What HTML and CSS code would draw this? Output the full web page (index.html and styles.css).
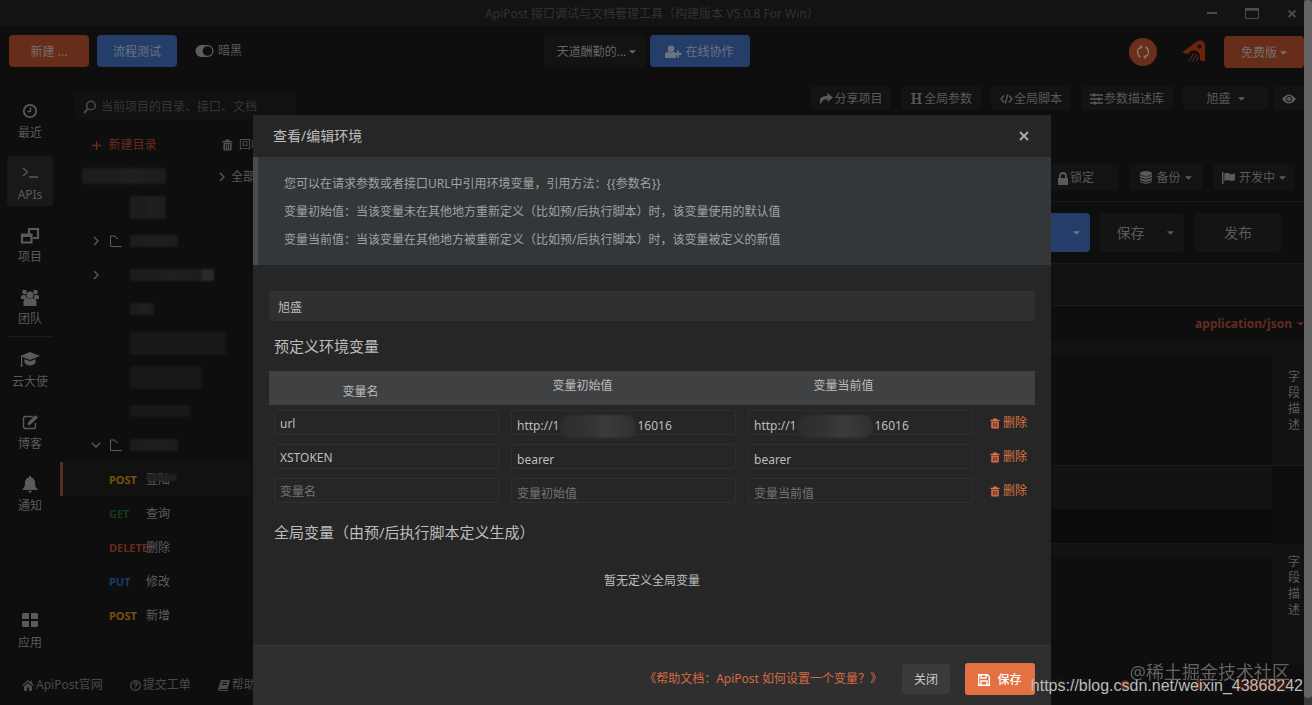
FILE: index.html
```html
<!DOCTYPE html>
<html lang="zh-CN">
<head>
<meta charset="utf-8">
<title>ApiPost</title>
<link rel="stylesheet" href="styles.css">
</head>
<body>
<svg class="defs" aria-hidden="true">
  <symbol id="i-trash" viewBox="0 0 12 12"><path fill-rule="evenodd" d="M4 0h4l.6 1.5H11.500V3H.5V1.500h2.900zM1.500 3.600h9V11q0 1-1 1h-7q-1 0-1-1zM3.500 5v5.500h.9V5zm2.100 0v5.500h.9V5zm2.100 0v5.500h.9V5z"/></symbol>
  <symbol id="i-caret" viewBox="0 0 8 4"><path d="M0 0h8L4 4z"/></symbol>
  <symbol id="i-chev" viewBox="0 0 8 10"><path d="M2 1l4 4-4 4" fill="none" stroke="currentColor" stroke-width="1.300"/></symbol>
  <symbol id="i-folder" viewBox="0 0 12 12"><path d="M.5 11V1h4.500l1.500 2.500H8M.5 11.500H12" fill="none" stroke="currentColor"/></symbol>
</svg>
<div class="window">
  <div class="app">
    <header class="titlebar">
      <h1 class="title">ApiPost 接口调试与文档管理工具（构建版本 V5.0.8 For Win）</h1>
      <div class="winctl">
        <button aria-label="最小化"><svg width="14" height="14" viewBox="0 0 14 14"><path d="M2 6h10" stroke="currentColor" stroke-width="2"/></svg></button>
        <button aria-label="最大化"><svg width="14" height="14" viewBox="0 0 14 14"><path d="M.5 1.500h13v10H.5z" fill="none" stroke="currentColor"/><path d="M0 2.500h14" stroke="currentColor" stroke-width="2.500"/></svg></button>
        <button aria-label="关闭窗口"><svg width="14" height="14" viewBox="0 0 14 14"><path d="M3.500 3.500l7 6.500M10.500 3.500l-7 6.500" stroke="currentColor" stroke-width="2"/></svg></button>
      </div>
    </header>

    <div class="topbar">
      <div class="group">
        <button class="btn orange wide">新建 ...</button>
        <button class="btn blue wide">流程测试</button>
        <button class="theme"><svg width="19" height="14" viewBox="0 0 19 14"><rect x=".5" y="1" width="18" height="12" rx="6" fill="currentColor"/><circle cx="12.500" cy="7" r="4.800" fill="#0e0e0e"/></svg>暗黑</button>
      </div>
      <div class="group center">
        <button class="btn dark team">天道酬勤的... <svg class="caret"><use href="#i-caret"/></svg></button>
        <button class="btn blue collab"><svg width="17" height="14" viewBox="0 0 17 14" fill="currentColor"><circle cx="6" cy="3.700" r="3.300"/><path d="M0 13V10q0-3 3.500-3.300 2.500 1.500 5 0Q10 6.800 11 8v5z"/><path d="M13 5.500v7M9.500 9h7" stroke="currentColor" stroke-width="2.200"/></svg>在线协作</button>
      </div>
      <div class="group right">
        <button class="sync" aria-label="同步"><svg width="16" height="16" viewBox="0 0 16 16" fill="none" stroke="currentColor" stroke-width="1.400"><path d="M5.500 13Q2.500 11.500 2.500 8T6 3.200M10.500 3q3 1.500 3 5T10 12.800"/><path d="M5 .8l3 2.300-3 2.500zM11 15.200l-3-2.300 3-2.500z" fill="currentColor" stroke="none"/></svg></button>
        <a class="avatar" href="#" aria-label="ApiPost"><svg width="28" height="28" viewBox="0 0 28 28"><path d="M2 14.500L16 4q2-1.500 4.500-1.500Q24.500 3 25 7v16q-3 .5-5-1 1-8-5-9.500-5-.5-7 3.500z" fill="#6e220a"/><circle cx="19.500" cy="8.500" r="2" fill="#1a1210"/><path d="M9 23l5-8M12.500 23.500l4.500-7.500M16.500 23l2-4" stroke="#5a2415" stroke-width="1.200"/></svg></a>
        <button class="btn orange plan">免费版 <svg class="caret"><use href="#i-caret"/></svg></button>
      </div>
    </div>

    <div class="work">
      <nav class="side">
        <a href="#"><svg width="16" height="16" viewBox="0 0 16 16" fill="none" stroke="currentColor"><circle cx="8" cy="8" r="6.200" stroke-width="1.800"/><path d="M8.500 4.500V8.500H5.500" stroke-width="1.400"/></svg>最近</a>
        <a href="#" class="on"><svg width="16" height="16" viewBox="0 0 16 16" fill="none" stroke="currentColor" stroke-width="1.300"><path d="M1 3l4.500 4L1 11M7 12h9"/></svg>APIs</a>
        <a href="#"><svg width="20" height="18" viewBox="0 0 20 18" fill="none" stroke="currentColor" stroke-width="2.200"><path d="M9 7V2h9v9h-5"/><path d="M2 7.500h9.500v8H2z"/><path d="M2 8.500h9" stroke-width="3"/></svg>项目</a>
        <a href="#"><svg width="18" height="17" viewBox="0 0 18 17" fill="currentColor"><circle cx="3.500" cy="3" r="2.300"/><circle cx="14.500" cy="3" r="2.300"/><circle cx="9" cy="6" r="3.500"/><path d="M0 10V8q0-2 2-2h2.500q.5 3 2 4zM18 10V8q0-2-2-2h-2.500q-.5 3-2 4zM2.500 17v-4q0-3.500 3.500-4 3 1.500 6 0 3.500 .5 3.500 4v4z"/></svg>团队</a>
        <hr>
        <a href="#"><svg width="20" height="15" viewBox="0 0 20 15" fill="currentColor"><path d="M10 0l10 4-10 4L0 4z"/><path d="M4.500 7v4q2.500 2.500 5.500 2.500t5.500-2.500V7L10 9.300z"/><path d="M1 4h1.300v8l.7 2.500H.5L1 12z"/></svg>云大使</a>
        <a href="#"><svg width="17" height="16" viewBox="0 0 17 16" fill="none" stroke="currentColor" stroke-width="1.400"><path d="M11 2.500H3.500q-2 0-2 2v8q0 2 2 2h8q2 0 2-2V9"/><path d="M6 11l.7-3 6.800-6.500 2 2L8.800 10z" fill="currentColor" stroke-width=".8"/></svg>博客</a>
        <a href="#"><svg width="16" height="17" viewBox="0 0 16 17" fill="currentColor"><path d="M7 0h2v1.500q4 .8 4 5 0 5 2.500 6.500v1H.5v-1Q3 11.500 3 6.500q0-4.200 4-5zM6 14.700h4q-.5 2-2 2t-2-2z"/></svg>通知</a>
        <a href="#" class="last"><svg width="16" height="14" viewBox="0 0 16 14" fill="currentColor"><path d="M1 0h6v6H0V1zM9 0h6l1 1v5H9zM0 8h7v6H1l-1-1zM9 8h7v5l-1 1H9z"/></svg>应用</a>
      </nav>

      <section class="tree">
        <label class="search"><svg width="14" height="14" viewBox="0 0 14 14" fill="none" stroke="currentColor"><circle cx="8" cy="5.500" r="4.300" stroke-width="1.600"/><path d="M5 8.800L1 13" stroke-width="2.200"/></svg><input type="text" placeholder="当前项目的目录、接口、文档" aria-label="搜索"></label>
        <div class="tools">
          <button class="newdir"><svg width="9" height="9" viewBox="0 0 9 9"><path d="M4.500 0v9M0 4.500h9" stroke="currentColor" stroke-width="1.300"/></svg>新建目录</button>
          <button class="bin"><svg width="11" height="12"><use href="#i-trash"/></svg>回收站</button>
        </div>
        <div class="tools second">
          <span class="smudge s0"></span>
          <button class="all"><svg class="chev"><use href="#i-chev"/></svg>全部</button>
        </div>
        <ul class="rows">
          <li><span class="smudge w36 tall"></span></li>
          <li><svg class="chev"><use href="#i-chev"/></svg><svg class="folder"><use href="#i-folder"/></svg><span class="smudge w48"></span></li>
          <li><svg class="chev"><use href="#i-chev"/></svg><span class="smudge w84 tip"></span></li>
          <li><span class="smudge w24"></span></li>
          <li><span class="smudge w96 faint tall"></span></li>
          <li><span class="smudge w72 faint tall"></span></li>
          <li><span class="smudge w60 faint"></span></li>
          <li><svg class="chev open"><use href="#i-chev"/></svg><svg class="folder"><use href="#i-folder"/></svg><span class="smudge w48"></span></li>
          <li class="api sel"><b class="post">POST</b><a href="#">登陆</a><i class="cover"></i></li>
          <li class="api"><b class="get">GET</b><a href="#">查询</a></li>
          <li class="api"><b class="del">DELETE</b><a href="#">删除</a></li>
          <li class="api"><b class="put">PUT</b><a href="#">修改</a></li>
          <li class="api"><b class="post">POST</b><a href="#">新增</a></li>
        </ul>
      </section>

      <main class="main">
        <div class="actions">
          <button class="chip"><svg width="14" height="12" viewBox="0 0 14 12" fill="currentColor"><path d="M8.500 0L14 4.500 8.500 9V6.300Q3 6 1.500 11.500-1.500 3 8.500 2.800z"/></svg>分享项目</button>
          <button class="chip"><svg width="13" height="13" viewBox="0 0 13 13" fill="none" stroke="currentColor"><path d="M3.500 1v11M9.500 1v11" stroke-width="2"/><path d="M1 1.500h5M7 1.500h5M1 11.500h5M7 11.500h5M3 6.500h7"/></svg>全局参数</button>
          <button class="chip"><svg width="13" height="12" viewBox="0 0 13 12" fill="none" stroke="currentColor" stroke-width="1.300"><path d="M4 2.500L1 6l3 3.500M9 2.500L12 6 9 9.500M7.700 1.500l-2.400 9"/></svg>全局脚本</button>
          <button class="chip lib"><svg width="13" height="12" viewBox="0 0 13 12" fill="none" stroke="currentColor" stroke-width="1.300"><path d="M0 2h13M0 6h13M0 10h13"/><path d="M4 .5v3M9 4.500v3M5 8.500v3" stroke-width="2.400"/></svg>参数描述库</button>
          <button class="chip env">旭盛 <svg class="caret"><use href="#i-caret"/></svg></button>
          <button class="chip eye" aria-label="查看环境"><svg width="14" height="10" viewBox="0 0 14 10"><path d="M0 5q7-9 14 0-7 9-14 0z" fill="currentColor"/><circle cx="7" cy="5" r="2.600" fill="none" stroke="#151515"/></svg></button>
        </div>
        <div class="status">
          <button class="chip lock"><svg width="12" height="13" viewBox="0 0 12 13"><path d="M1 6h10v7H1z" fill="currentColor"/><path d="M3 6V4q0-3 3-3t3 3v2" fill="none" stroke="currentColor" stroke-width="1.800"/></svg>锁定</button>
          <button class="chip backup"><svg width="12" height="13" viewBox="0 0 12 13" fill="currentColor"><ellipse cx="6" cy="2.500" rx="6" ry="2.400"/><path d="M0 4q6 3 12 0v2q-6 3.500-12 0zM0 7q6 3 12 0v2q-6 3.500-12 0zM0 10q6 3 12 0v1q-6 3.500-12 0z"/></svg>备份 <svg class="caret"><use href="#i-caret"/></svg></button>
          <button class="chip dev"><svg width="13" height="12" viewBox="0 0 13 12" fill="currentColor"><path d="M0 0h1.500v12H0zM2.300 1.500Q5 0 7.500 1.500T13 1v7q-3 1.500-5.500.5T2.300 9z"/></svg>开发中 <svg class="caret"><use href="#i-caret"/></svg></button>
        </div>
        <div class="sendbar">
          <button class="big send">发送 <svg class="caret"><use href="#i-caret"/></svg></button>
          <button class="big save">保存 <svg class="caret"><use href="#i-caret"/></svg></button>
          <button class="big publish">发布</button>
        </div>
        <div class="band"></div>
        <div class="mime"><button>application/json <svg class="caret"><use href="#i-caret"/></svg></button></div>
        <div class="editor first"><div class="pane"></div><div class="desc">字段描述</div></div>
        <div class="strip"></div>
        <div class="editor resp"><div class="pane"></div><div class="desc">字段描述</div></div>
      </main>
    </div>

    <footer class="foot">
      <a href="#"><svg width="12" height="11" viewBox="0 0 12 11" fill="currentColor"><path d="M6 0l2.500 2V.8H10v2.500l2 1.900-.8.900L6 1.700.8 6.100 0 5.200zM2 6.200L6 3l4 3.200V11H7V7.500H5V11H2z"/></svg>ApiPost官网</a>
      <a href="#"><svg width="11" height="11" viewBox="0 0 11 11" fill="none" stroke="currentColor" stroke-width="1.200"><circle cx="5.500" cy="5.500" r="4.800"/><path d="M3.800 4.200q0-1.500 1.700-1.500t1.700 1.400Q7.200 5 5.500 5.600v1M5.500 7.400v1.200"/></svg>提交工单</a>
      <a href="#"><svg width="12" height="11" viewBox="0 0 12 11"><path d="M3 0h9L9.500 9H2q-.8 1 .3 1.100H10V11H1.500Q-.5 10.500.3 8z" fill="currentColor"/><path d="M4.500 2.500h4.500M4 4.500h4.500" stroke="#0e0e0e"/></svg>帮助</a>
      <div class="footright"><span>字体大小</span><i class="dot"></i><i class="dot"></i><i class="dot long"></i></div>
    </footer>

    <div class="overlay">
      <section class="modal" role="dialog" aria-labelledby="dlg">
        <header class="mhead">
          <h2 id="dlg">查看/编辑环境</h2>
          <button aria-label="关闭对话框"><svg width="10" height="10" viewBox="0 0 10 10"><path d="M1 1l8 8M9 1L1 9" stroke="currentColor" stroke-width="2"/></svg></button>
        </header>
        <div class="info">
          <p>您可以在请求参数或者接口URL中引用环境变量，引用方法：{{参数名}}</p>
          <p>变量初始值：当该变量未在其他地方重新定义（比如预/后执行脚本）时，该变量使用的默认值</p>
          <p>变量当前值：当该变量在其他地方被重新定义（比如预/后执行脚本）时，该变量被定义的新值</p>
        </div>
        <div class="mbody">
          <input class="name" type="text" value="旭盛" aria-label="环境名称">
          <h3>预定义环境变量</h3>
          <table class="vars">
            <colgroup><col class="c"><col class="c"><col class="c"><col></colgroup>
            <thead><tr><th class="h1">变量名</th><th class="h2">变量初始值</th><th class="h3">变量当前值</th><th></th></tr></thead>
            <tbody>
              <tr>
                <td><input type="text" value="url" aria-label="变量名"></td>
                <td class="masked"><input type="text" value="http://1&nbsp;&nbsp;&nbsp;&nbsp;&nbsp;&nbsp;&nbsp;&nbsp;&nbsp;&nbsp;&nbsp;&nbsp;&nbsp;&nbsp;&nbsp;&nbsp;&nbsp;&nbsp;&nbsp;&nbsp;&nbsp;&nbsp;&nbsp;&nbsp;&nbsp;16016" aria-label="变量初始值"><i></i></td>
                <td class="masked"><input type="text" value="http://1&nbsp;&nbsp;&nbsp;&nbsp;&nbsp;&nbsp;&nbsp;&nbsp;&nbsp;&nbsp;&nbsp;&nbsp;&nbsp;&nbsp;&nbsp;&nbsp;&nbsp;&nbsp;&nbsp;&nbsp;&nbsp;&nbsp;&nbsp;&nbsp;&nbsp;16016" aria-label="变量当前值"><i></i></td>
                <td><button><svg width="10" height="11"><use href="#i-trash"/></svg>删除</button></td>
              </tr>
              <tr>
                <td><input type="text" value="XSTOKEN" aria-label="变量名"></td>
                <td><input type="text" value="bearer" aria-label="变量初始值"></td>
                <td><input type="text" value="bearer" aria-label="变量当前值"></td>
                <td><button><svg width="10" height="11"><use href="#i-trash"/></svg>删除</button></td>
              </tr>
              <tr>
                <td><input type="text" placeholder="变量名" aria-label="变量名"></td>
                <td><input type="text" placeholder="变量初始值" aria-label="变量初始值"></td>
                <td><input type="text" placeholder="变量当前值" aria-label="变量当前值"></td>
                <td><button><svg width="10" height="11"><use href="#i-trash"/></svg>删除</button></td>
              </tr>
            </tbody>
          </table>
          <h3>全局变量（由预/后执行脚本定义生成）</h3>
          <p class="empty">暂无定义全局变量</p>
        </div>
        <footer class="mfoot">
          <a href="#">《帮助文档：ApiPost 如何设置一个变量？》</a>
          <button class="close">关闭</button>
          <button class="ok"><svg width="12" height="12" viewBox="0 0 12 12"><path d="M.7.700h8.500l2.100 2.100v8.500H.7z" fill="none" stroke="currentColor" stroke-width="1.400"/><path d="M3 1v3h5V1M3 11V7h6v4" fill="none" stroke="currentColor" stroke-width="1.300"/></svg>保存</button>
        </footer>
      </section>
    </div>
  </div>
  <div class="scroll"><div class="thumb"></div></div>
  <div class="marks"><p class="m1">@稀土掘金技术社区</p><p class="m2">https://blog.csdn.net/weixin_43868242</p></div>
</div>
</body>
</html>
```
FILE: styles.css
```css
* { box-sizing: border-box; margin: 0; padding: 0; }
body { background: #0e0e0e; color: #5c5c5c; font: 12px/18px "Noto Sans", "Noto Sans CJK SC", sans-serif; }
button, input { font: inherit; color: inherit; background: none; border: 0; }
button { display: flex; align-items: center; justify-content: center; gap: 3px; white-space: nowrap; padding-top: 2px; }
a { color: inherit; text-decoration: none; }
ul { list-style: none; }
svg { flex: none; }
svg:not([fill]) { fill: currentColor; }
.defs { position: absolute; width: 0; height: 0; }
.caret { width: 7px; height: 4px; }
.chev { width: 8px; height: 10px; }
.folder { width: 12px; height: 12px; }

.window { display: flex; height: 100vh; position: relative; overflow: hidden; }
.app { flex: 1; min-width: 0; display: flex; flex-direction: column; position: relative; }
.scroll { width: 8px; background: #3a3a3a; }
.thumb { height: 99%; background: #646464; border-radius: 4px; }

.titlebar { display: grid; grid-template-columns: 1fr auto 1fr; align-items: center; height: 26px; background: #131313; padding: 2px 5px 0; }
.title { grid-column: 2; font-size: 12px; font-weight: 400; color: #323232; }
.winctl { display: flex; justify-content: flex-end; gap: 26px; color: #4c4c4c; }
.winctl button { padding: 0; }

.topbar { display: grid; grid-template-columns: 1fr auto 1fr; align-items: start; padding: 9px 0 8px 9px; }
.group { display: flex; align-items: center; gap: 8px; }
.group.center { gap: 4px; margin-right: 20px; }
.group.right { justify-content: flex-end; gap: 16px; padding-top: 1px; }
.btn { height: 32px; border-radius: 4px; color: #77706c; }
.wide, .plan { width: 80px; }
.orange { background: #662d1a; }
.blue { background: #243d69; color: #6c7484; }
.dark { background: #131313; color: #646464; }
.team { width: 102px; padding-left: 4px; }
.collab { width: 100px; }
.theme { margin-left: 10px; gap: 4px; padding: 0; }
.sync { width: 28px; height: 28px; border-radius: 50%; background: #6a2f1a; color: #85766f; margin-right: 7px; padding: 0; }
.avatar { width: 28px; height: 28px; }

.work { flex: 1; display: flex; min-height: 0; }
.side { width: 60px; padding: 18px 7px 11px; display: flex; flex-direction: column; gap: 12px; }
.side a { height: 50px; width: 46px; border-radius: 4px; display: flex; flex-direction: column; align-items: center; justify-content: space-between; padding: 9px 0 2px; white-space: nowrap; color: #5a5a5a; }
.side a svg { max-height: 18px; }
.side .on { background: #191919; }
.side hr { border: 0; border-top: 1px solid #1c1c1c; margin: -6px 0 -6px; }
.side .last { margin-top: auto; }

.tree { width: 245px; padding-top: 17px; }
.search { display: flex; align-items: center; gap: 4px; margin: 0 10px 0 14px; padding: 2px 9px 0; height: 26px; background: #111; border-radius: 4px; color: #484848; }
.search input { flex: 1; min-width: 0; }
.search input::placeholder { color: #363636; opacity: 1; }
.tools { display: flex; height: 34px; padding: 0 10px 0 32px; margin-top: 8px; }
.newdir { color: #6e2c18; gap: 7px; width: 65px; margin-right: 65px; }
.bin { color: #505050; gap: 6px; }
.second { height: 29px; margin: 0; padding-left: 22px; align-items: center; }
.second .smudge { margin-right: 52px; }
.all { gap: 5px; color: #5c5c5c; }
.smudge { height: 12px; background: linear-gradient(90deg, #1d1d1d 30%, #1f2022 60%, #1c1c1c); filter: blur(1px); }
.s0 { width: 84px; height: 16px; }
.w24 { width: 24px; } .w36 { width: 36px; } .w48 { width: 48px; } .w60 { width: 60px; } .w72 { width: 72px; } .w84 { width: 84px; } .w96 { width: 96px; }
.faint { background: #171818; }
.tip { border-right: 12px solid #2a2a2a; }
.tall { height: 23px; }
.rows li { height: 34px; display: flex; align-items: center; padding-left: 32px; position: relative; }
.rows .smudge { position: absolute; left: 70px; }
.rows .folder { margin-left: 10px; }
.open { transform: rotate(90deg); }
.rows .api { padding: 2px 0 0 49px; }
.api b { width: 37px; font-size: 11px; }
.sel { background: #111; border-left: 3px solid #57301f; }
.rows .sel { padding-left: 46px; }
.post { color: #765109; } .get { color: #123c1d; } .del { color: #642c1d; } .put { color: #173f6b; }
.cover { position: absolute; left: 84px; top: 12px; width: 30px; height: 7px; background: #202020; filter: blur(1px); }

.main { flex: 1; min-width: 0; display: flex; flex-direction: column; }
.actions { display: flex; justify-content: flex-end; gap: 10px; padding-top: 10px; }
.chip { height: 24px; width: 80px; border-radius: 3px; background: #131313; color: #5a5a5a; gap: 1px; padding-top: 1px; }
.lib { width: 92px; }
.env { width: 85px; gap: 7px; }
.eye { margin-left: -5px; width: 31px; }
.status { display: flex; justify-content: flex-end; gap: 10px; padding: 0 9px 11px; margin-top: 54px; border-bottom: 1px solid #191919; }
.status .chip { height: 26px; }
.status .lock { width: 73px; justify-content: flex-start; padding: 2px 10px 0 11px; }
.backup, .dev { gap: 4px; }
.status .backup { width: 74px; }
.status .dev { width: 82px; }
.sendbar { display: flex; justify-content: flex-end; gap: 10px; padding: 11px 22px 11px; border-bottom: 1px solid #191919; }
.big { height: 39px; border-radius: 4px; background: #141414; font-size: 14px; color: #5a5a5a; gap: 22px; padding: 0; }
.save { width: 84px; padding-left: 6px; } .publish { width: 88px; }
.send { width: 90px; background: #243d69; color: #6c7484; padding-left: 12px; }
.band { height: 42px; background: #111; border-bottom: 1px solid #1b1b1b; }
.mime { height: 35px; display: flex; justify-content: flex-end; }
.mime button { color: #652b1e; font-weight: 700; gap: 5px; padding: 0; }
.editor { display: flex; background: #121212; height: 125px; }
.pane { flex: 1; background: #0e0e0e; margin-top: 14px; margin-right: 16px; }
.desc { width: 16px; padding: 28px 4px 0 0; line-height: 16px; text-align: left; word-break: break-all; }
.first { border-bottom: 1px solid #1b1b1b; }
.strip { height: 78px; margin-right: 32px; border-top: 43px solid #121212; background: #0c0c0c; border-bottom: 1px solid #181818; }
.resp { flex: 1; min-height: 0; }
.resp .desc { padding-top: 10px; }

.foot { height: 40px; display: flex; align-items: center; gap: 27px; padding-left: 22px; color: #4b4b4b; }
.foot a { display: flex; align-items: center; gap: 2px; white-space: nowrap; }
.footright { margin-left: auto; display: flex; align-items: center; gap: 30px; padding-right: 14px; color: #222; }
.dot { width: 10px; height: 10px; border-radius: 5px; background: #55210f; }
.dot + .dot { margin-left: 34px; }
.dot + .dot.long { margin-left: 0; width: 56px; background: #3b170c; filter: blur(2px); }

.overlay { position: absolute; inset: 0; display: flex; justify-content: center; padding-top: 115px; }
.modal { width: 798px; background: #262626; color: #bdbdbd; display: flex; flex-direction: column; }
.mhead { height: 42px; display: flex; align-items: center; justify-content: space-between; padding: 0 22px 0 20px; }
.mhead button { padding: 0; color: #aaa; }
.mhead h2 { font-size: 14px; font-weight: 400; }
.info { border-left: 5px solid #4a4d4f; background: #343739; color: #a0a2a4; padding: 13px 26px 11px; line-height: 28px; }
.mbody { flex: 1; padding: 26px 16px 0; }
.name { width: 100%; height: 30px; background: #303030; padding: 1px 9px 0; display: block; border-radius: 2px; }
.mbody h3 { font-size: 15px; font-weight: 400; line-height: 50px; padding-left: 5px; }
.vars { width: 100%; table-layout: fixed; border-collapse: collapse; }
.c { width: 237px; }
.vars thead { background: #404142; }
.vars th { height: 34px; font-weight: 400; }
.vars .h1 { padding: 8px 54px 0 0; }
.vars .h2 { padding: 0 84px 4px 0; }
.vars .h3 { padding: 0 36px 4px 0; }
.vars td { height: 34px; padding: 5px 7px 4px 5px; }
.vars td input { display: block; width: 100%; height: 25px; border: 1px solid #303030; border-radius: 3px; padding: 2px 5px 0; }
.vars td + td input { padding-top: 6px; }
.vars input::placeholder { color: #747474; opacity: 1; }
.vars td button { color: #dd7146; padding-left: 5px; }
.vars td:last-child { padding: 0 0 0 5px; }
.masked { position: relative; }
.masked i { position: absolute; left: 54px; top: 10px; width: 76px; height: 23px; border-radius: 11px; background: linear-gradient(90deg, #2c2c2c, #333435 40%, #3a3b3c 60%, #303030); filter: blur(1px); }
.empty { text-align: center; line-height: 20px; padding-top: 14px; }
.mfoot { height: 60px; background: #2f2f2f; border-top: 1px solid #383838; display: flex; align-items: center; justify-content: flex-end; padding: 6px 16px 0; }
.mfoot a { color: #d56b42; margin-right: 20px; }
.mfoot button { border-radius: 3px; }
.close { width: 48px; height: 30px; background: #3a3a3a; color: #ccc; margin-right: 15px; }
.ok { width: 70px; height: 32px; background: #e37142; color: #fff; font-weight: 500; gap: 7px; }

.marks { position: absolute; right: 9px; bottom: 9px; text-align: right; pointer-events: none; }
.m1 { font-size: 18px; line-height: 18px; color: #777; opacity: .8; padding-right: 13px; margin-bottom: -5px; }
.m2 { font: 16px/20px "Liberation Sans", Arial, sans-serif; color: #bcbcbc; }
```
